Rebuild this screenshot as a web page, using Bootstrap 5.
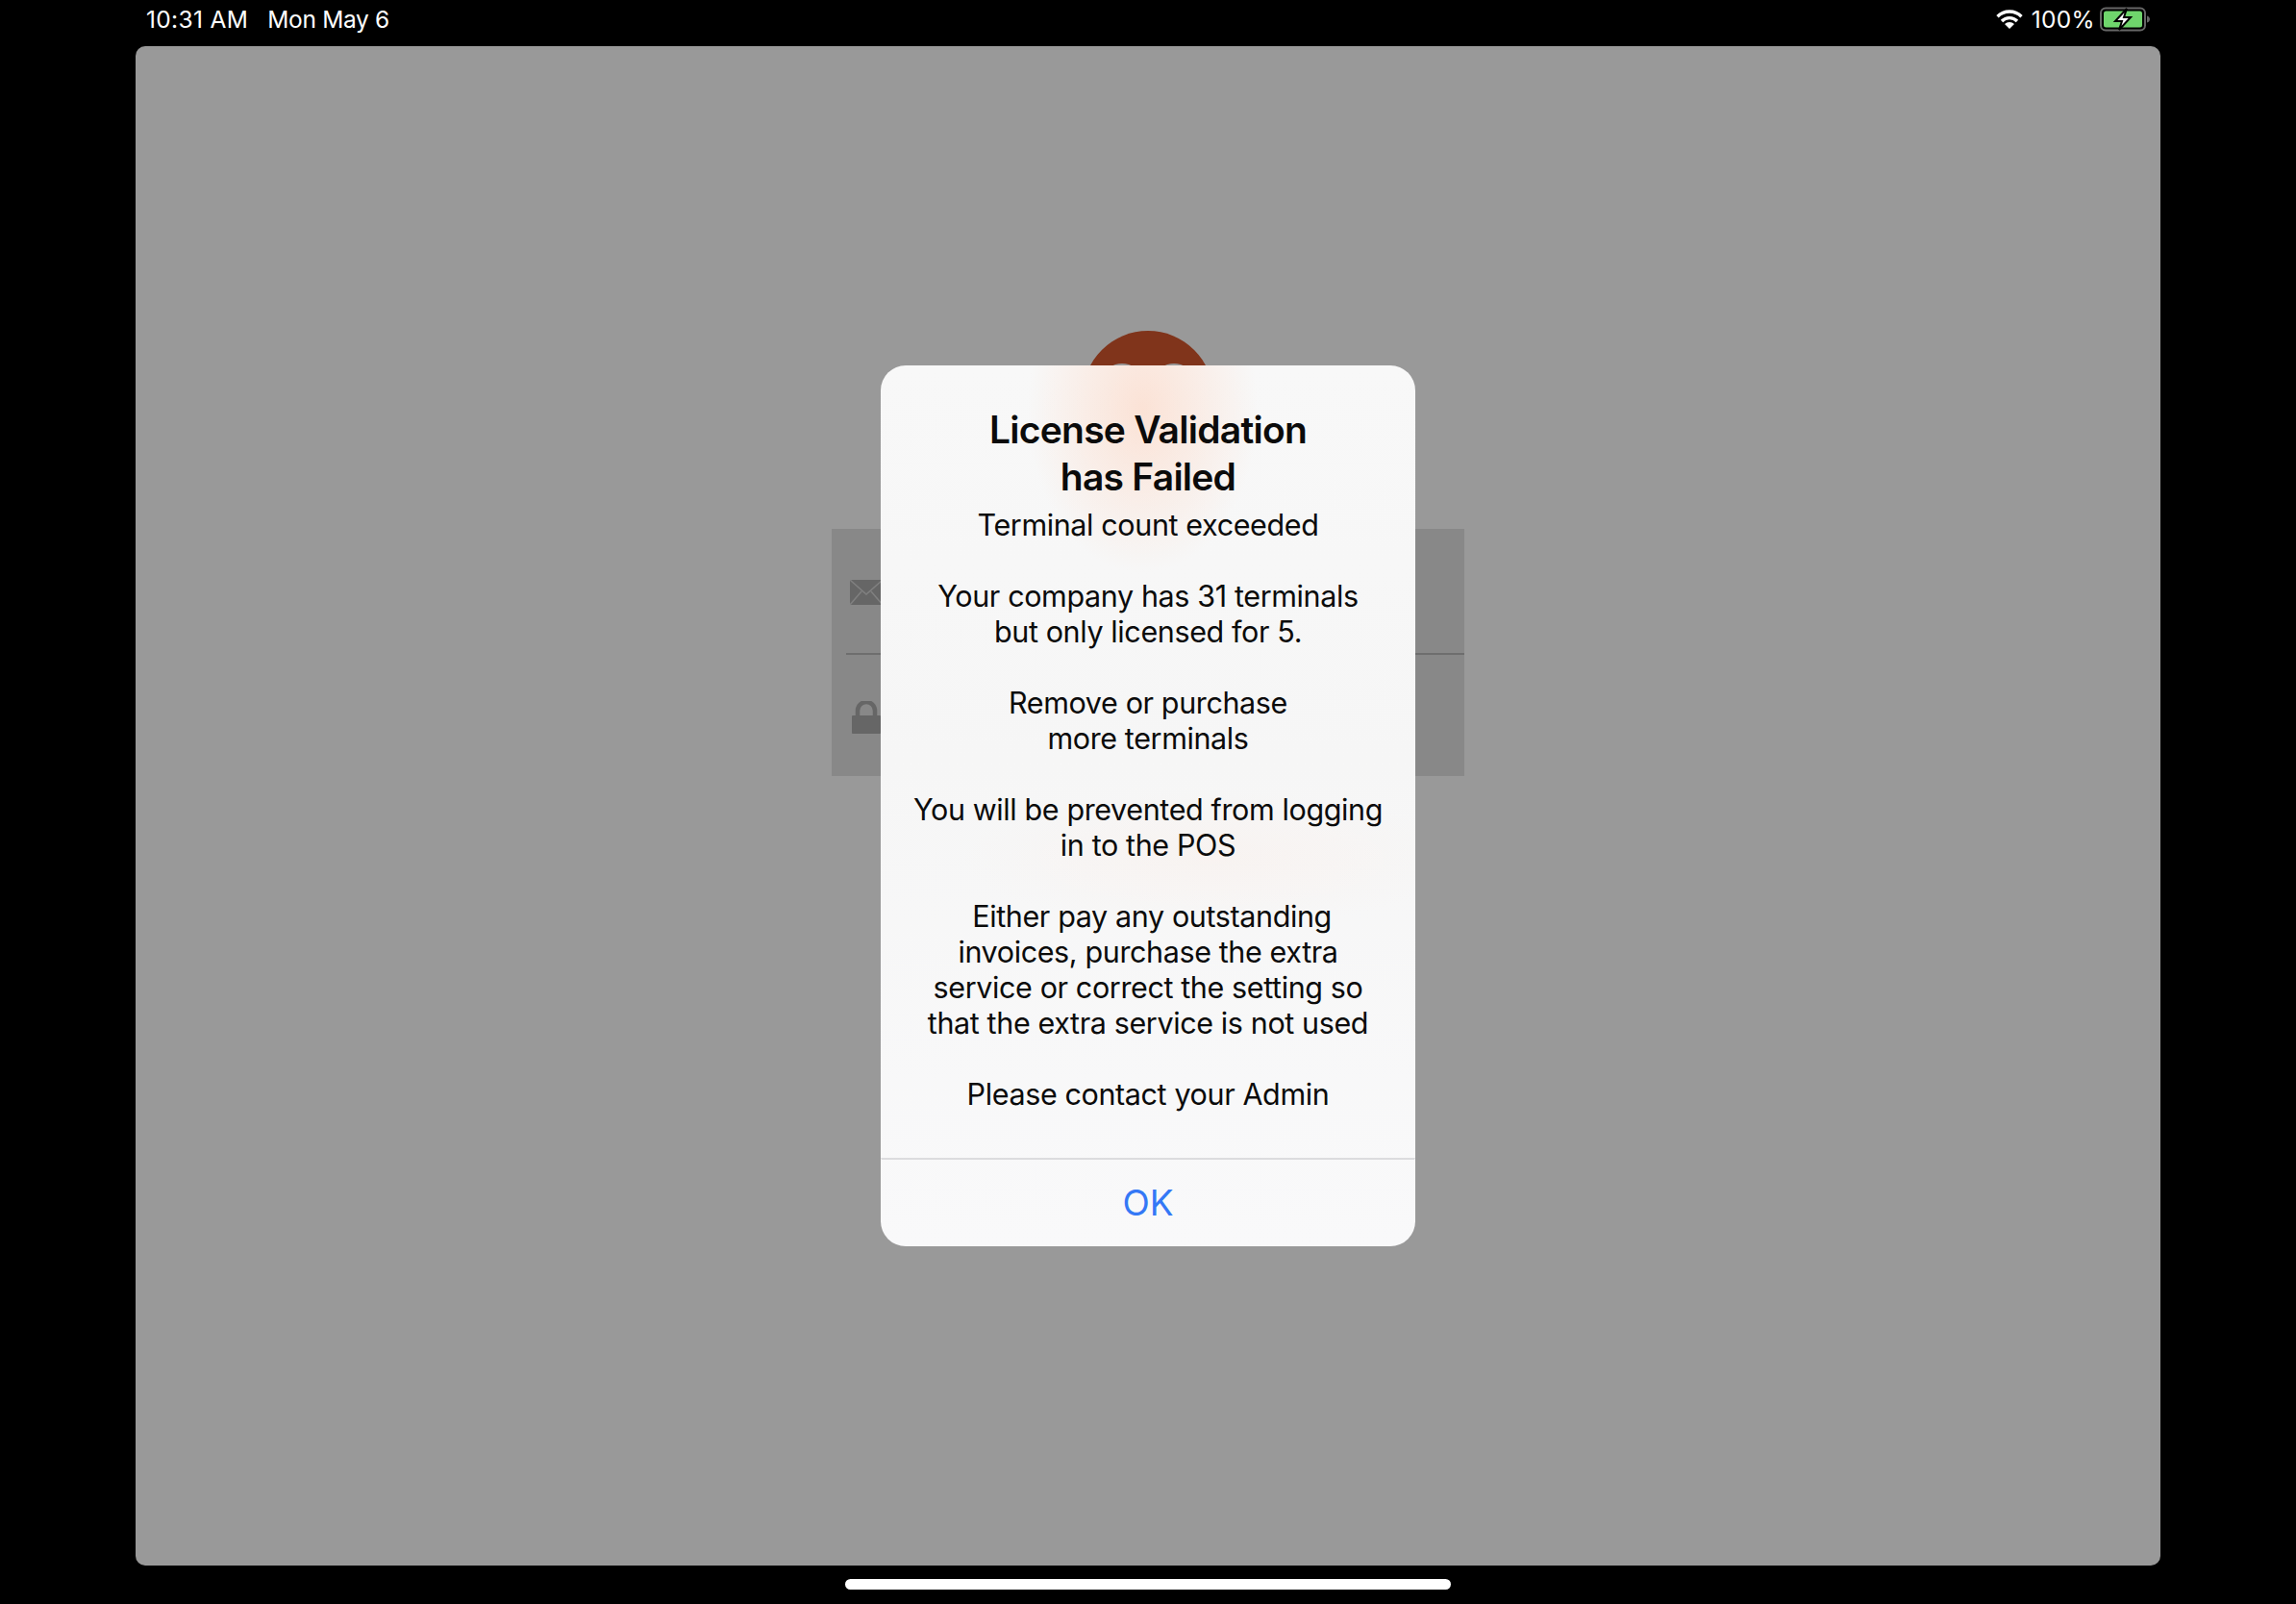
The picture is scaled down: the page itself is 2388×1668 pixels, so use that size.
<!DOCTYPE html>
<html lang="en">
<head>
<meta charset="utf-8">
<title>License Validation</title>
<link href="https://cdn.jsdelivr.net/npm/bootstrap@5.3.0/dist/css/bootstrap.min.css" rel="stylesheet">
<style>
html,body{height:100%;}
body{background:#000;overflow:hidden;font-family:Inter,"Noto Sans",sans-serif;}
.page-shell{width:2388px;height:1668px;}
.status-strip{height:48px;padding:0 151px 8px 152px;color:#fff;font-size:24.5px;line-height:40px;}
.status-time{letter-spacing:.35px;}
.status-date{margin-left:20px;letter-spacing:-.33px;}
.status-pct{margin:0 5px 0 9px;letter-spacing:.35px;}
.screen-pane{width:2106px;height:1580px;margin:0 auto;background:#999;border-radius:10px;padding-top:296px;}
.avatar-disc{width:136px;height:136px;border-radius:50%;background:#80341b;overflow:hidden;}
.avatar-disc svg{display:block;}
.login-form{width:658px;height:257px;margin-top:70px;background:#888;}
.login-row{height:129px;padding:2px 0 0 19px;}
.login-row + .login-rule + .login-row{height:126px;padding:3px 0 0 21px;}
.login-rule{height:2px;background:#6e6e6e;margin-left:15px;}
.alert-box{width:556px;height:916px;border-radius:26px;color:#0b0b0b;overflow:hidden;
 background:
  radial-gradient(ellipse 120px 170px at 49% 5%,rgba(255,205,180,.5),rgba(255,205,180,0) 100%),
  radial-gradient(ellipse 260px 70px at 62% 56%,rgba(255,228,215,.2),rgba(255,228,215,0) 100%),
  linear-gradient(#f8f8f8,#f6f6f6 45%,#f9f9fa);}
.alert-main{padding:42px 10px 49px;height:824px;}
.alert-title{font-size:39px;line-height:49px;font-weight:600;margin:0 0 7px;letter-spacing:-.75px;}
.alert-body{font-size:30.5px;line-height:37px;white-space:pre-line;margin:0;letter-spacing:-.38px;}
.alert-action{height:92px;border-top:2px solid #dcdcde;font-size:37px;line-height:88px;color:#3478f6;padding:0;border-radius:0;text-decoration:none;}
.alert-action:hover{color:#3478f6;}
.home-zone{height:40px;padding-top:14px;}
.home-pill{width:630px;height:11px;background:#fff;}
</style>
</head>
<body>
<div class="page-shell d-flex flex-column">
  <div class="status-strip d-flex justify-content-between">
    <div><span class="status-time">10:31 AM</span><span class="status-date">Mon May 6</span></div>
    <div class="d-flex align-items-center">
      <svg width="28" height="22" viewBox="0 0 28 22" aria-hidden="true">
        <path d="M1.5 8.2a17.8 17.8 0 0 1 25 0" fill="none" stroke="#fff" stroke-width="3.4"/>
        <path d="M6 13a11.2 11.2 0 0 1 16 0" fill="none" stroke="#fff" stroke-width="3.4"/>
        <path d="M14 21l-5-5a7 7 0 0 1 10 0z" fill="#fff"/>
      </svg>
      <span class="status-pct">100%</span>
      <svg width="53" height="26" viewBox="0 0 53 26" aria-hidden="true">
        <rect x="1" y="1.5" width="46" height="23" rx="5" fill="none" stroke="#666" stroke-width="2"/>
        <rect x="4" y="4.5" width="40" height="17" rx="2.5" fill="#6fd56c"/>
        <path d="M49 9.5c2 .5 3 2 3 3.5s-1 3-3 3.5z" fill="#666"/>
        <path d="M28 2 16 15h7l-3 9 12-13h-7z" fill="#fff" stroke="#000" stroke-width="2"/>
      </svg>
    </div>
  </div>

  <div class="screen-pane position-relative d-flex flex-column align-items-center">
    <div class="avatar-disc">
      <svg width="136" height="136" viewBox="0 0 136 136" aria-hidden="true">
        <ellipse cx="41" cy="48" rx="18" ry="14" fill="#999"/>
        <ellipse cx="95" cy="48" rx="18" ry="14" fill="#999"/>
      </svg>
    </div>
    <div class="login-form">
      <div class="login-row d-flex align-items-center">
        <svg width="34" height="26" viewBox="0 0 34 26" aria-hidden="true">
          <rect width="34" height="26" fill="#666"/>
          <path d="M0 0l17 15L34 0M0 26l12-14M34 26 22 12" fill="none" stroke="#808080" stroke-width="1.5"/>
        </svg>
      </div>
      <div class="login-rule"></div>
      <div class="login-row d-flex align-items-center">
        <svg width="30" height="34" viewBox="0 0 30 34" aria-hidden="true">
          <path d="M6 16V10a9 9 0 0 1 18 0v6" fill="none" stroke="#666" stroke-width="4.5"/>
          <rect y="15" width="30" height="19" rx="1" fill="#666"/>
        </svg>
      </div>
    </div>

    <div class="position-absolute top-0 start-0 w-100 h-100 d-flex align-items-center justify-content-center">
      <div class="alert-box d-flex flex-column text-center">
        <div class="alert-main">
          <h1 class="alert-title">License Validation<br>has Failed</h1>
          <p class="alert-body">Terminal count exceeded

Your company has 31 terminals
but only licensed for 5.

Remove or purchase
more terminals

You will be prevented from logging
in to the POS

&nbsp;Either pay any outstanding
invoices, purchase the extra
service or correct the setting so
that the extra service is not used

Please contact your Admin</p>
        </div>
        <button type="button" class="btn btn-link alert-action w-100">OK</button>
      </div>
    </div>
  </div>

  <div class="home-zone d-flex justify-content-center">
    <div class="home-pill rounded-pill"></div>
  </div>
</div>
<script src="https://cdn.jsdelivr.net/npm/bootstrap@5.3.0/dist/js/bootstrap.bundle.min.js"></script>
</body>
</html>
